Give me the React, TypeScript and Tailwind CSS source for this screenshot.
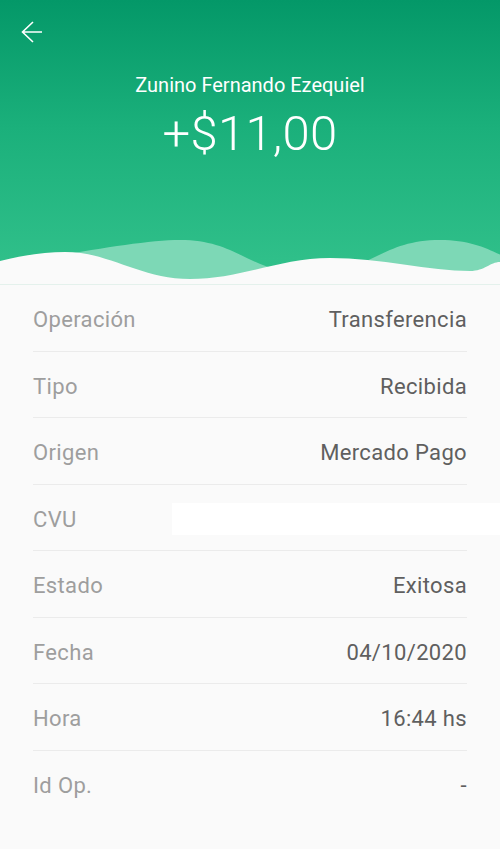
type Row = { label: string; value: string; hidden?: boolean };

const rows: Row[] = [
  { label: "Operación", value: "Transferencia" },
  { label: "Tipo", value: "Recibida" },
  { label: "Origen", value: "Mercado Pago" },
  { label: "CVU", value: "", hidden: true },
  { label: "Estado", value: "Exitosa" },
  { label: "Fecha", value: "04/10/2020" },
  { label: "Hora", value: "16:44 hs" },
  { label: "Id Op.", value: "-" },
];

function BackArrow() {
  return (
    <svg className="h-[24px] w-[24px]" viewBox="0 0 24 24" fill="none" stroke="currentColor" strokeWidth={1.6}>
      <path d="M2.5 12H22M13 2 2.5 12 13 22" strokeLinejoin="miter" />
    </svg>
  );
}

function Waves() {
  return (
    <svg
      className="absolute bottom-0 left-0 h-[50px] w-full"
      viewBox="0 0 500 50"
      preserveAspectRatio="none"
    >
      <path
        d="M-80 40 C -20 40, 120 6, 180 6 C 240 6, 250 40, 310 40 C 370 40, 380 6, 440 6 C 500 6, 510 40, 570 40 L570 50 L-80 50 Z"
        fill="#7dd8b6"
      />
      <path
        d="M0 27 C 25 21, 45 18, 65 18 C 110 18, 140 45, 190 45 C 240 45, 280 24, 330 24 C 380 24, 430 37, 470 37 C 485 37, 490 28, 500 28 L500 50 L0 50 Z"
        fill="#fafafa"
      />
    </svg>
  );
}

export default function App() {
  return (
    <div className="min-h-[849px] w-full bg-[#fafafa] font-['Roboto',sans-serif]">
      <header className="relative h-[285px] overflow-hidden border-b border-[#e4f1ec] bg-[linear-gradient(180deg,#049868_0%,#1bb07b_45%,#33c28c_100%)]">
        <div className="px-[20px] pt-[20px] text-white">
          <BackArrow />
        </div>
        <div className="mt-[29px] flex flex-col items-center text-white">
          <p className="text-[20px] leading-[24px]">Zunino Fernando Ezequiel</p>
          <p className="mt-[8px] text-[49px] font-light leading-[58px] tracking-[0.3px]">+$11,00</p>
        </div>
        <Waves />
      </header>

      <div className="px-[33px]">
        {rows.map((row, i) => (
          <div
            key={row.label}
            className={`flex h-[66.5px] items-center justify-between pt-[4px] tracking-[0.35px] ${
              i < rows.length - 1 ? "border-b border-[#ebebeb]" : ""
            }`}
          >
            <span className="text-[22px] text-[#9e9e9e]">{row.label}</span>
            {row.hidden ? (
              <span className="-mr-[33px] h-[32px] w-[328px] bg-white" />
            ) : (
              <span className="text-[22px] text-[#5f5f5f]">{row.value}</span>
            )}
          </div>
        ))}
      </div>
    </div>
  );
}
